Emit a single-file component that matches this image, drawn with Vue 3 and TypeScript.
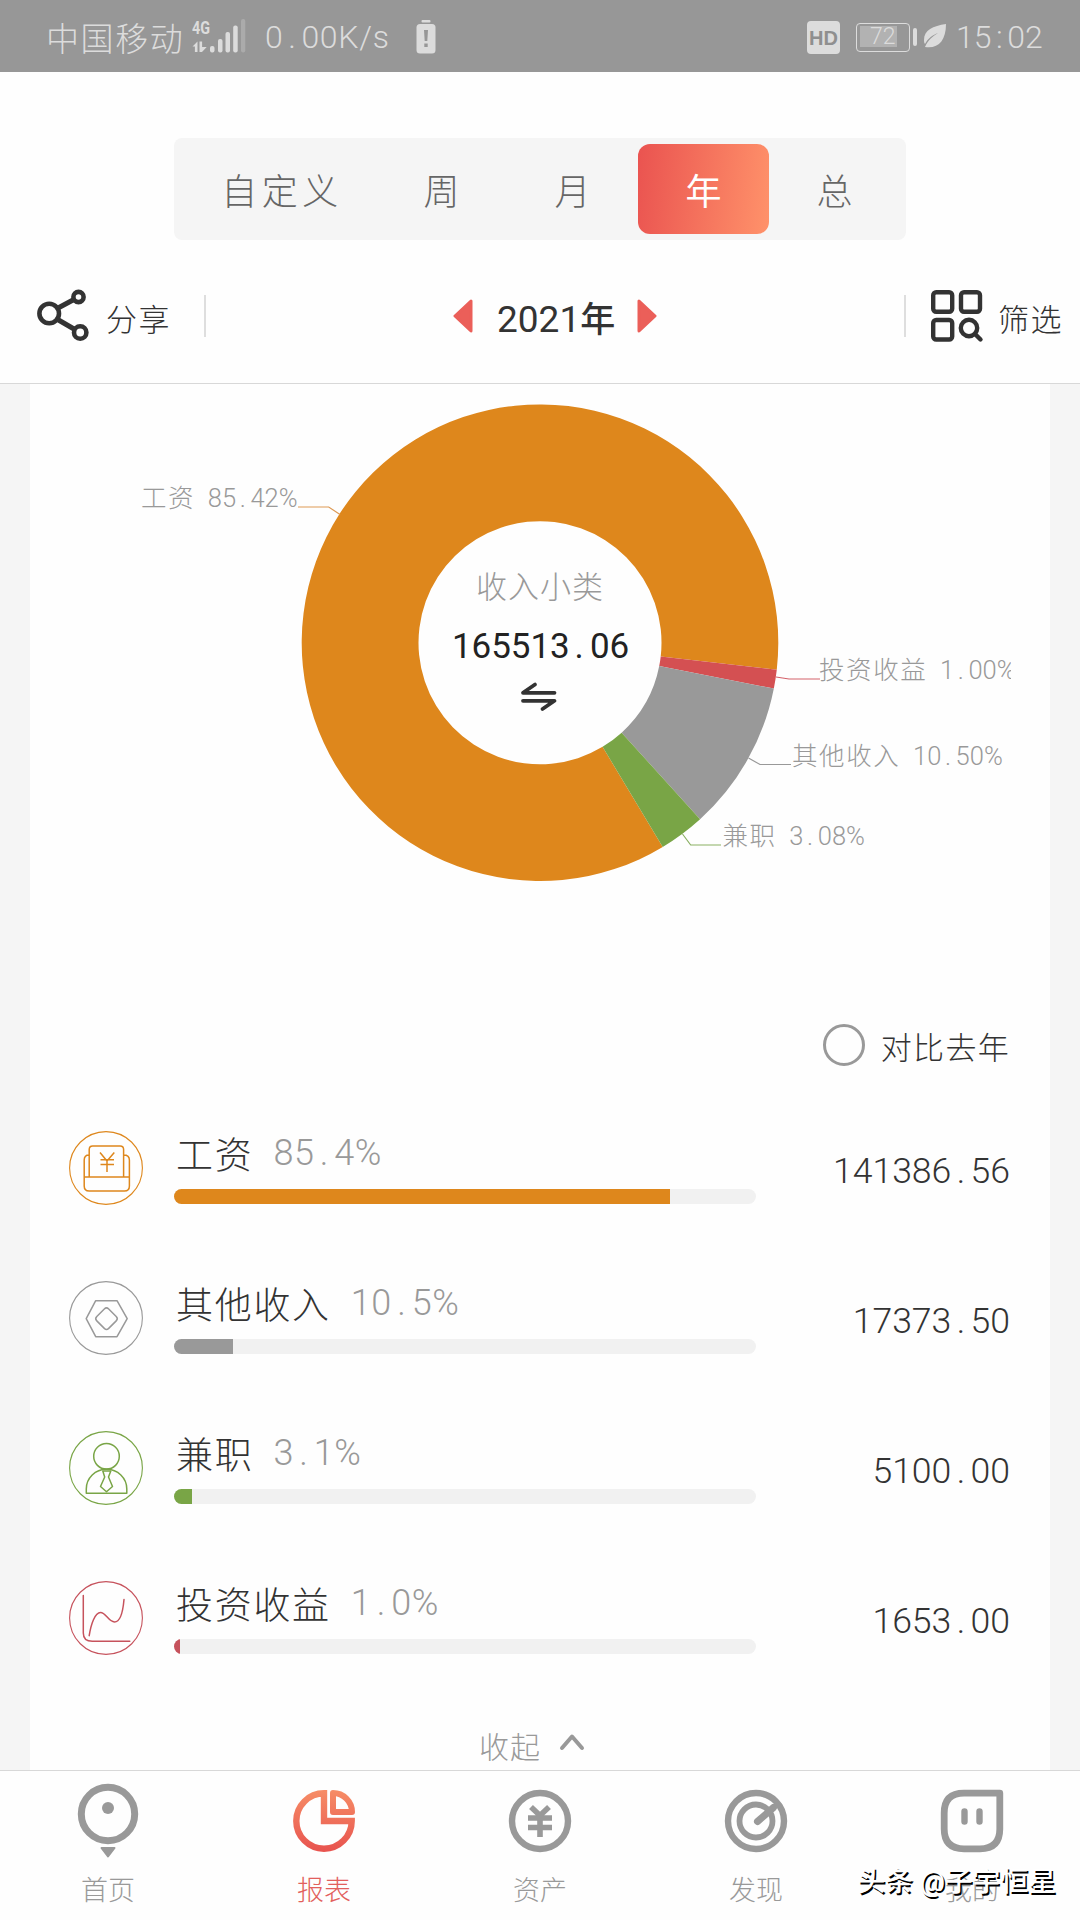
<script setup lang="ts">
import { h } from 'vue'

interface Category {
  id: string
  name: string
  percent: string
  amount: string
  color: string
  fill: number
}

interface Leader {
  text: string
  x: number
  y: number
  color: string
  points: string
}

/* Number whose decimal point takes a full digit cell */
const Num = (props: { value: string }) => {
  const [whole, rest] = props.value.split('.')
  return h('span', { class: 'num' }, [whole, h('span', { class: 'dot' }, '.'), rest.replace('%', ''),
    rest.endsWith('%') ? h('span', { class: 'pct' }, '%') : null])
}
Num.props = ['value']

const periods = ['自定义', '周', '月', '年', '总']
const activePeriod = '年'

const categories: Category[] = [
  { id: 'salary', name: '工资', percent: '85.4%', amount: '141386.56', color: '#de871c', fill: 85.2 },
  { id: 'other', name: '其他收入', percent: '10.5%', amount: '17373.50', color: '#999999', fill: 10.2 },
  { id: 'parttime', name: '兼职', percent: '3.1%', amount: '5100.00', color: '#79a546', fill: 3.1 },
  { id: 'invest', name: '投资收益', percent: '1.0%', amount: '1653.00', color: '#c6525c', fill: 1.05 },
]

const cx = 540
const cy = 642.7
const outer = 238.3
const inner = 121.5

function slice(from: number, to: number): string {
  const pt = (r: number, deg: number) => {
    const a = (deg * Math.PI) / 180
    return `${(cx + r * Math.cos(a)).toFixed(2)} ${(cy + r * Math.sin(a)).toFixed(2)}`
  }
  const large = to - from > 180 ? 1 : 0
  return `M${pt(outer, from)} A${outer} ${outer} 0 ${large} 1 ${pt(outer, to)} L${pt(inner, to)} A${inner} ${inner} 0 ${large} 0 ${pt(inner, from)} Z`
}

const slices = [
  { d: slice(59, 366.5), color: '#de871c' },
  { d: slice(6.5, 11.1), color: '#d45052' },
  { d: slice(11.1, 47.8), color: '#999999' },
  { d: slice(47.8, 59), color: '#79a546' },
]

const leaders: Leader[] = [
  { text: '工资 85.42%', x: 141, y: 507, color: '#de9a55', points: '298,507 328.7,507 340,514.6' },
  { text: '投资收益 1.00%', x: 819, y: 679, color: '#d4626a', points: '776,677 789,679 820,679' },
  { text: '其他收入 10.50%', x: 792, y: 765, color: '#999999', points: '748.5,758 760,764.5 791,764.5' },
  { text: '兼职 3.08%', x: 722.5, y: 845, color: '#8ab062', points: '682.5,834 690.7,845 721,845' },
]

/* Horizontal start of every glyph, wide cells for Chinese and narrow ones for digits */
function cells(text: string, start: number): string {
  let x = start
  return [...text]
    .map((c) => {
      const at = c === '.' ? x + 3.6 : x
      x += /[\u4e00-\u9fff]/.test(c) ? 27.1 : c === ' ' ? 12.6 : 14.2
      return at.toFixed(1)
    })
    .join(' ')
}

const tabs = [
  { id: 'home', label: '首页' },
  { id: 'report', label: '报表' },
  { id: 'asset', label: '资产' },
  { id: 'find', label: '发现' },
  { id: 'mine', label: '我的' },
]
</script>

<template>
  <div class="screen">
    <header class="status">
      <span class="carrier">中国移动</span>
      <svg class="signal" width="54" height="42" viewBox="192 12 54 42" fill="#dcdcdc">
        <text x="192" y="34" font-size="19" font-weight="700" textLength="18" lengthAdjust="spacingAndGlyphs">4G</text>
        <path d="M192.500 46.500l5-5v10.500h-2.600v-5.500zM199.500 41.500h2.600v5.500h4.600l-4.700 5h-2.500z" />
        <rect x="210" y="46" width="4.500" height="6.500" rx="2" />
        <rect x="218" y="39" width="4.500" height="13.500" rx="2" />
        <rect x="225.500" y="32" width="4.500" height="20.500" rx="2" />
        <rect x="233.200" y="25.500" width="4.500" height="27" rx="2" />
        <rect x="241" y="19" width="4.300" height="33.500" rx="2" opacity=".3" />
      </svg>
      <span class="speed"><Num value="0.00K/s" /></span>
      <svg class="alert" width="20" height="34" viewBox="0 0 20 34">
        <rect x="5.500" y="0" width="9" height="2.400" rx="1" fill="#dcdcdc" />
        <rect x=".5" y="4" width="19" height="29.500" rx="3.500" fill="#dcdcdc" />
        <path d="M8 10h4l-.7 11H8.700zM8.300 23.500h3.400v3.400H8.300z" fill="#979797" />
      </svg>
      <span class="grow" />
      <span class="hd">HD</span>
      <span class="battery"><span class="level">72</span></span>
      <span class="nub" />
      <svg class="leaf" width="24" height="26" viewBox="0 0 24 26">
        <path d="M23 1C10 3 1 7 1 17c0 2 .3 3 1 4 3-6 8-9 13-11-5 3-10 7-13 14 13 2 21-6 21-23z" fill="#dcdcdc" />
      </svg>
      <span class="clock">15<i>:</i>02</span>
    </header>

    <nav class="periods">
      <span v-for="p in periods" :key="p" class="period" :class="{ wide: p.length > 1, active: p === activePeriod }">{{ p }}</span>
    </nav>

    <section class="toolbar">
      <div class="tool share">
        <svg width="54" height="54" viewBox="36 290 54 54" fill="none" stroke="#333" stroke-width="4.600">
          <path d="M59 308.500L73 301M58.500 321L74 330" stroke-width="5" />
          <circle cx="49.200" cy="314.500" r="9.800" />
          <circle cx="78.500" cy="298" r="5.100" />
          <circle cx="80.200" cy="333.500" r="6.200" />
        </svg>
        <span>分享</span>
      </div>
      <div class="year">
        <svg width="20" height="36" viewBox="0 0 20 36"><path d="M18 3v30L2 18z" fill="#eb5f59" stroke="#eb5f59" stroke-width="3" stroke-linejoin="round" /></svg>
        <span>2021<b>年</b></span>
        <svg width="20" height="36" viewBox="0 0 20 36"><path d="M2 3v30L18 18z" fill="#eb5f59" stroke="#eb5f59" stroke-width="3" stroke-linejoin="round" /></svg>
      </div>
      <div class="tool filter">
        <svg width="54" height="54" viewBox="0 0 54 54" fill="none" stroke="#333" stroke-width="4.400">
          <rect x="3.200" y="3.200" width="19" height="19.500" rx="3" />
          <rect x="31" y="3.200" width="19" height="19.500" rx="3" />
          <rect x="3.200" y="31" width="19" height="19.500" rx="3" />
          <circle cx="39" cy="39" r="8.200" />
          <path d="M45 45l5.500 5.500" stroke-linecap="round" />
        </svg>
        <span>筛选</span>
      </div>
    </section>

    <main class="content">
      <div class="card">
        <svg class="chart" width="981" height="600" viewBox="30 384 981 600">
          <path v-for="s in slices" :key="s.color" :d="s.d" :fill="s.color" />
          <g v-for="l in leaders" :key="l.text">
            <polyline :points="l.points" fill="none" :stroke="l.color" stroke-width="1.200" />
            <text class="leader" :x="cells(l.text, l.x)" :y="l.y">{{ l.text }}</text>
          </g>
          <text class="kind" x="476" y="597.500">收入小类</text>
          <text class="total" x="452 471.600 491.200 510.800 530.400 550 574.500 590 609.500" y="657.500">165513.06</text>
          <g fill="none" stroke="#333" stroke-width="3.800" stroke-linecap="round" stroke-linejoin="round">
            <path d="M554.500 692.800H523L535 684.500" />
            <path d="M523 700.800H554.500L542.500 709" />
          </g>
        </svg>

        <div class="compare"><span class="radio" />对比去年</div>

        <ul class="list">
          <li v-for="c in categories" :key="c.id" class="row">
            <svg class="badge" width="74" height="74" viewBox="0 0 74 74" fill="none" :stroke="c.color" stroke-width="1.500" stroke-linejoin="round">
              <circle cx="37" cy="37" r="36.400" stroke-width="1.100" />
              <g v-if="c.id === 'salary'">
                <path d="M20.200 46V18.500q0-3.500 3.500-3.500h27.400q3.500 0 3.500 3.500V46M20.200 24q-5 0-5 5v26q0 5 5 5h35.200q5 0 5-5V29q0-5-5.800-5M15.200 46h45.200" />
                <path d="M31 21.500l7 8.500 7.300-8.500M38 30v11M31.500 28.700H45M31.500 33.500H45" />
              </g>
              <g v-else-if="c.id === 'other'">
                <path d="M26.700 19.700H48L58.200 37.700 48 55.700H26.700L17.200 37.700z" />
                <path d="M35.300 28q2.200-2.200 4.400 0l7.500 7.500q2.200 2.200 0 4.400l-7.500 7.500q-2.200 2.200-4.400 0l-7.500-7.500q-2.200-2.200 0-4.400z" />
              </g>
              <g v-else-if="c.id === 'parttime'">
                <circle cx="37.500" cy="25.300" r="12.800" />
                <path d="M17.300 62.300V58c0-11 9-19.700 20.200-19.700S57.800 47 57.800 58v4.300z" />
                <path d="M33.800 40h8l-2.300 6 4 9.500-6 5.200-6-5.200 4.200-9.500z" />
              </g>
              <g v-else stroke-linecap="round">
                <path d="M14.300 14.500V52q0 8.300 9 8.300h37.500" />
                <path d="M20.200 54.700C22 43 26 31.500 31.500 31.500s8 9.500 14 9.500S54 30 55 18.500" />
              </g>
            </svg>
            <div class="info">
              <div class="title"><span class="name">{{ c.name }}</span><span class="percent"><Num :value="c.percent" /></span></div>
              <div class="track"><div class="bar" :style="{ width: c.fill + '%', background: c.color }" /></div>
            </div>
            <span class="amount"><Num :value="c.amount" /></span>
          </li>
        </ul>

        <div class="collapse">
          收起
          <svg width="28" height="20" viewBox="0 0 28 20" fill="none" stroke="#999" stroke-width="4" stroke-linecap="round" stroke-linejoin="round"><path d="M4 16L14 4.500 24 16" /></svg>
        </div>
      </div>
    </main>

    <footer class="tabbar">
      <div v-for="t in tabs" :key="t.id" class="tab" :class="{ on: t.id === 'report' }">
        <svg width="80" height="80" viewBox="-40 -40 80 80" fill="none" stroke="#999" stroke-width="6.400">
          <g v-if="t.id === 'home'">
            <circle cx="0" cy="-7" r="26.700" stroke-width="7" />
            <circle cx="0" cy="-13" r="6" fill="#999" stroke="none" />
            <path d="M-6.500 27h13L0 35.500z" fill="#999" stroke-width="2" stroke-linejoin="round" />
          </g>
          <g v-else-if="t.id === 'report'" stroke="url(#warm)" stroke-linejoin="round">
            <path d="M0-27.700V0H27.700A27.700 27.700 0 1 1 0-27.700z" stroke-linejoin="miter" />
            <path d="M9-28V-9H28A19 19 0 0 0 9-28z" stroke-width="6" />
          </g>
          <g v-else-if="t.id === 'asset'">
            <circle r="28" />
            <path d="M-9-14L0-5.500 9-14M0-5V16M-12-3H12M-12 6.500H12" stroke-width="5.600" />
          </g>
          <g v-else-if="t.id === 'find'">
            <circle r="28" />
            <circle r="16.500" stroke-width="5.800" />
            <path d="M1.500.500L17.500-13.500" stroke-width="7" stroke-linecap="round" />
          </g>
          <g v-else>
            <path d="M-8-27.800H27.800V8Q27.800 27.800 8 27.800H-8Q-27.800 27.800-27.800 8V-8Q-27.800-27.800-8-27.800z" stroke-linejoin="round" stroke-width="6.800" />
            <path d="M-7.500-9.500V0.500M7.500-9.500V0.500" stroke-linecap="round" />
          </g>
          <defs>
            <linearGradient id="warm" gradientUnits="userSpaceOnUse" x1="0" y1="-30" x2="0" y2="30">
              <stop offset="0" stop-color="#f68c66" />
              <stop offset="1" stop-color="#e8544f" />
            </linearGradient>
          </defs>
        </svg>
        <span>{{ t.label }}</span>
      </div>
      <div class="watermark">头条 @子宇恒星</div>
    </footer>
  </div>
</template>

<style>
body {
  background: #fff;
}
.num {
  white-space: nowrap;
}
.num .dot {
  padding: 0 0.15em;
}
</style>

<style scoped>
.screen {
  width: 1080px;
  height: 1920px;
  display: flex;
  flex-direction: column;
  overflow: hidden;
  background: #fefefe;
  color: #333;
  font-family: Roboto, 'Noto Sans CJK SC', sans-serif;
  font-weight: 300;
}
.status {
  height: 72px;
  flex: none;
  box-sizing: border-box;
  padding: 2px 37px 0 46px;
  display: flex;
  align-items: center;
  background: #979797;
  color: #dcdcdc;
}
.carrier {
  width: 146px;
  font-size: 33px;
  letter-spacing: 1.6px;
}
.signal {
  margin-top: -8px;
}
.speed {
  width: 151px;
  margin-left: 19px;
  font-size: 32px;
  letter-spacing: 0.7px;
}
.alert {
  margin-top: -1px;
}
.grow {
  flex: 1;
}
.hd {
  width: 33px;
  height: 33px;
  border-radius: 4px;
  background: #dcdcdc;
  color: #8f8f8f;
  font: 700 20px/34px 'Liberation Sans', sans-serif;
  text-align: center;
}
.battery {
  width: 54px;
  height: 29px;
  box-sizing: border-box;
  margin-left: 16px;
  border: 1.5px solid #dcdcdc;
  border-radius: 4px;
  padding: 2.5px;
}
.level {
  display: block;
  width: 37px;
  height: 21px;
  box-sizing: border-box;
  padding-right: 1px;
  background: #b2b2b2;
  font-size: 23px;
  line-height: 22px;
  text-align: right;
}
.nub {
  width: 4.5px;
  height: 18px;
  margin-left: 2.5px;
  border-radius: 2px;
  background: #dcdcdc;
}
.leaf {
  margin: -3px 0 0 6px;
}
.clock {
  width: 87px;
  margin-left: 9px;
  font-size: 32px;
}
.clock i {
  font-style: normal;
  padding: 0 4.5px;
}
.periods {
  width: 732px;
  height: 102px;
  flex: none;
  box-sizing: border-box;
  margin: 66px auto 0;
  padding: 6px 6px 6px 14px;
  border-radius: 8px;
  background: #f5f5f5;
  display: flex;
}
.period {
  flex: none;
  width: 131px;
  height: 90px;
  border-radius: 12px;
  font-size: 36px;
  line-height: 99px;
  text-align: center;
  color: #666;
}
.period.wide {
  width: 188px;
  letter-spacing: 4.5px;
}
.period.active {
  background: linear-gradient(97deg, #ea5350, #ff926a);
  color: #fff;
  font-weight: 400;
}
.toolbar {
  height: 144px;
  flex: none;
  box-sizing: border-box;
  padding-top: 9px;
  border-bottom: 1px solid #d8d8d8;
  display: flex;
  align-items: center;
  justify-content: space-between;
}
.tool {
  height: 42px;
  box-sizing: border-box;
  display: flex;
  align-items: center;
  font-size: 31px;
  letter-spacing: 1.5px;
}
.tool span {
  margin-top: 3px;
}
.share {
  width: 206px;
  padding-left: 36px;
  border-right: 2px solid #dedede;
}
.share svg {
  margin-right: 16px;
}
.filter {
  width: 176px;
  padding-left: 24px;
  border-left: 2px solid #dedede;
}
.filter svg {
  margin-right: 14px;
}
.year {
  display: flex;
  align-items: center;
  font-size: 37px;
  font-weight: 400;
}
.year span {
  width: 118px;
  margin: 0 22px 0 24px;
  text-align: center;
  white-space: nowrap;
}
.year b {
  font-size: 35px;
  font-weight: 500;
}
.content {
  height: 1386px;
  flex: none;
  padding: 0 30px;
  background: #f5f5f5;
}
.card {
  height: 100%;
  display: flex;
  flex-direction: column;
  background: #fefefe;
}
.chart {
  flex: none;
  display: block;
}
.leader {
  font-size: 25.5px;
  fill: #999;
}
.kind {
  font-size: 31px;
  letter-spacing: 1px;
  fill: #999;
}
.total {
  font-size: 35px;
  font-weight: 400;
  fill: #222;
}
.compare {
  height: 42px;
  flex: none;
  margin: 40px 40px 0 0;
  display: flex;
  align-items: center;
  justify-content: flex-end;
  font-size: 31px;
  letter-spacing: 1.3px;
}
.radio {
  width: 42px;
  height: 42px;
  box-sizing: border-box;
  margin-right: 16px;
  border: 3px solid #999;
  border-radius: 50%;
}
.list {
  flex: none;
  margin: 27px 0 0;
  padding: 0 40px 0 39px;
  list-style: none;
}
.row {
  height: 150px;
  display: flex;
  align-items: center;
}
.badge {
  flex: none;
}
.info {
  width: 582px;
  margin-left: 31px;
  padding-bottom: 1px;
}
.title {
  height: 57px;
  box-sizing: border-box;
  padding-bottom: 15px;
  display: flex;
  align-items: center;
  white-space: nowrap;
}
.name {
  margin-left: 2px;
  font-size: 37px;
  letter-spacing: 1.7px;
}
.percent {
  margin-left: 20px;
  font-size: 36px;
  letter-spacing: 0.5px;
  color: #999;
}
.track {
  height: 15px;
  border-radius: 7.5px;
  overflow: hidden;
  background: #f1f1f1;
}
.bar {
  height: 100%;
}
.amount {
  flex: 1;
  text-align: right;
  padding-top: 5px;
  font-size: 35.6px;
}
.collapse {
  height: 46px;
  flex: none;
  margin-top: 29px;
  padding-right: 15px;
  display: flex;
  align-items: center;
  justify-content: center;
  font-size: 30px;
  letter-spacing: 1px;
  color: #999;
}
.collapse svg {
  margin: -6px 0 0 17px;
}
.tabbar {
  position: relative;
  flex: 1;
  box-sizing: border-box;
  border-top: 1px solid #d8d8d8;
  display: flex;
  background: #fefefe;
}
.tab {
  width: 216px;
  padding-top: 9.5px;
  display: flex;
  flex-direction: column;
  align-items: center;
  font-size: 27px;
  line-height: 40px;
  color: #999;
}
.tab span {
  margin-top: 10px;
}
.tab.on {
  color: #e2605c;
}
.watermark {
  position: absolute;
  right: 24px;
  bottom: 18px;
  color: #fff;
  font-size: 27.8px;
  line-height: 40px;
  font-weight: 500;
  text-shadow: 1.5px 1.5px 0 #000;
  white-space: nowrap;
}
</style>
